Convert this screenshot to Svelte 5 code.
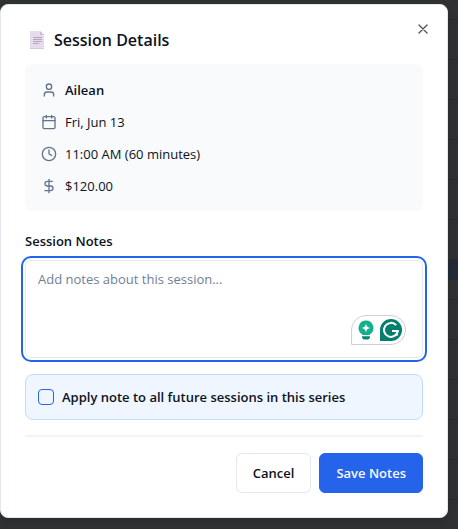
<script lang="ts">
  let notes = $state('');
  let applyToSeries = $state(false);
</script>

<div class="backdrop">
  <div class="dialog" role="dialog" aria-modal="true" aria-labelledby="dialog-title">
    <button class="close" type="button" aria-label="Close">
      <svg width="16" height="16" viewBox="0 0 24 24" fill="none" stroke="currentColor" stroke-width="2" stroke-linecap="round" stroke-linejoin="round"><path d="M18 6 6 18M6 6l12 12" /></svg>
    </button>

    <header>
      <svg width="22" height="20" viewBox="0 0 22 20" aria-hidden="true">
        <path d="M5 1h10l4 4v14H5z" fill="#e6dcee" />
        <path d="M15 1l4 4h-4z" fill="#c8bed2" />
        <path d="M5 18.5h14" stroke="#d6c8e2" />
        <path d="M8 7.5h9M8 9.5h9M8 11.5h9M8 13.5h6" stroke="#b0a5b9" />
      </svg>
      <h2 id="dialog-title">Session Details</h2>
    </header>

    <ul class="details">
      <li>
        <svg class="icon" viewBox="0 0 24 24"><path d="M19 21v-2a4 4 0 0 0-4-4H9a4 4 0 0 0-4 4v2" /><circle cx="12" cy="7" r="4" /></svg>
        <strong>Ailean</strong>
      </li>
      <li>
        <svg class="icon" viewBox="0 0 24 24"><path d="M8 2v4M16 2v4M3 10h18" /><rect x="3" y="4" width="18" height="18" rx="2" /></svg>
        <span>Fri, Jun 13</span>
      </li>
      <li>
        <svg class="icon" viewBox="0 0 24 24"><circle cx="12" cy="12" r="10" /><path d="M12 6v6l4 2" /></svg>
        <span>11:00 AM (60 minutes)</span>
      </li>
      <li>
        <svg class="icon" viewBox="0 0 24 24"><path d="M12 2v20M17 5H9.5a3.500 3.500 0 0 0 0 7h5a3.500 3.500 0 0 1 0 7H6" /></svg>
        <span>$120.00</span>
      </li>
    </ul>

    <label class="notes-label" for="notes">Session Notes</label>
    <div class="notes">
      <textarea id="notes" placeholder="Add notes about this session..." bind:value={notes}></textarea>
      <div class="assistant" aria-hidden="true">
        <svg width="18" height="22" viewBox="0 0 18 22">
          <path d="M9 1.500a7.500 7.500 0 0 0-4.300 13.600c.6.400.8.900.8 1.400h7c0-.5.200-1 .8-1.400A7.500 7.500 0 0 0 9 1.500z" fill="#12b08c" />
          <path d="M9 4.500c.6 3 1.500 3.900 4.500 4.500-3 .6-3.900 1.500-4.500 4.500-.6-3-1.500-3.900-4.500-4.500 3-.6 3.900-1.500 4.500-4.500z" fill="#fff" />
          <path d="M5 16.500h8" stroke="#fff" />
          <path d="M5 17.200h8c0 2.300-1 3.300-2.500 3.300h-3C6 20.500 5 19.500 5 17.200z" fill="#078571" />
        </svg>
        <svg width="22" height="22" viewBox="0 0 22 22">
          <path d="M11 0a11 11 0 1 1 0 22H0V11A11 11 0 0 1 11 0z" fill="#047e6d" />
          <path d="M16.200 6.200A7 7 0 1 0 17.900 12" fill="none" stroke="#fff" stroke-width="2" />
          <path d="M12 12h6.800M17 12.500v4" fill="none" stroke="#fff" stroke-width="2" />
        </svg>
      </div>
    </div>

    <label class="series">
      <input type="checkbox" bind:checked={applyToSeries} />
      <span>Apply note to all future sessions in this series</span>
    </label>

    <footer>
      <button class="btn" type="button">Cancel</button>
      <button class="btn primary" type="button">Save Notes</button>
    </footer>
  </div>
</div>

<style>
  :global(body) {
    margin: 0;
    background: #303132;
  }
  .backdrop {
    box-sizing: border-box;
    min-height: 100vh;
    padding: 4px 10px 11px 0;
    background:
      linear-gradient(#222b37, #222b37) right 260px / 10px 20px no-repeat,
      repeating-linear-gradient(transparent 0 19px, #292a2b 19px 20px, transparent 20px 40px) right 0 / 10px 100% no-repeat,
      #303132;
    color: #0c1222;
    font: 13px/20px "Open Sans", "Noto Sans", sans-serif;
  }
  .dialog {
    position: relative;
    box-sizing: border-box;
    padding: 23px 24px 24px;
    border: 1px solid #e2e8f0;
    border-radius: 8px;
    background: #fff;
    box-shadow: 0 4px 8px rgba(0, 0, 0, 0.1);
  }
  button,
  textarea {
    font: inherit;
    color: inherit;
  }
  .close {
    position: absolute;
    top: 16px;
    right: 16px;
    display: flex;
    padding: 0;
    border: 0;
    background: none;
    color: #555361;
  }
  header {
    display: flex;
    align-items: center;
    gap: 7px;
  }
  h2 {
    margin: 0;
    font-size: 16px;
    font-weight: 600;
    line-height: 24px;
  }
  .details {
    display: flex;
    flex-direction: column;
    gap: 12px;
    margin: 12px 0 0;
    padding: 16px 16px 15px;
    border-radius: 8px;
    background: #f8fafc;
    list-style: none;
  }
  li {
    display: flex;
    align-items: center;
    gap: 8px;
  }
  strong {
    font-weight: 600;
  }
  .icon {
    width: 16px;
    height: 16px;
    fill: none;
    stroke: #64748b;
    stroke-width: 2;
    stroke-linecap: round;
    stroke-linejoin: round;
  }
  .notes-label {
    display: block;
    margin-top: 20px;
    font-weight: 600;
  }
  .notes {
    position: relative;
    margin-top: 9px;
  }
  textarea {
    display: block;
    box-sizing: border-box;
    width: 100%;
    height: 98px;
    padding: 8px 12px;
    border: 1px solid #e2e8f0;
    border-radius: 6px;
    outline: 2px solid #2563eb;
    outline-offset: 2px;
    background: #fff;
    resize: none;
  }
  textarea::placeholder {
    color: #708096;
    opacity: 1;
  }
  .assistant {
    position: absolute;
    right: 17px;
    bottom: 13px;
    display: flex;
    align-items: center;
    gap: 5px;
    box-sizing: border-box;
    height: 30px;
    padding: 0 3px 0 5px;
    border: 1px solid #cfcfdc;
    border-radius: 15px 15px 15px 0;
    background: #fff;
  }
  .series {
    display: flex;
    align-items: center;
    gap: 8px;
    margin-top: 16px;
    padding: 12px;
    border: 1px solid #bfdbfe;
    border-radius: 8px;
    background: #eff6ff;
    font-weight: 600;
  }
  .series input {
    appearance: none;
    box-sizing: border-box;
    width: 16px;
    height: 16px;
    margin: 0;
    border: 1px solid #2563eb;
    border-radius: 4px;
  }
  .series input:checked {
    background: #2563eb;
  }
  footer {
    display: flex;
    justify-content: flex-end;
    gap: 8px;
    margin-top: 15px;
    padding-top: 16px;
    border-top: 2px solid #f1f5f9;
  }
  .btn {
    height: 40px;
    padding: 0 16px;
    border: 1px solid #e2e8f0;
    border-radius: 6px;
    background: #fff;
    font-weight: 600;
  }
  .primary {
    border-color: #2563eb;
    background: #2563eb;
    color: #f8fafc;
  }
</style>
